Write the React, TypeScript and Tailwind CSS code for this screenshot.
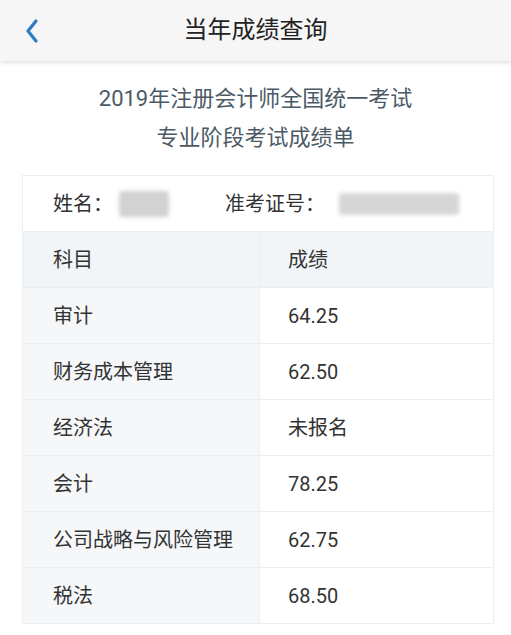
import type { FC } from "react";

const font = { fontFamily: 'Roboto, "Noto Sans CJK SC", "Noto Sans", sans-serif' };

const scores: { subject: string; score: string }[] = [
  { subject: "审计", score: "64.25" },
  { subject: "财务成本管理", score: "62.50" },
  { subject: "经济法", score: "未报名" },
  { subject: "会计", score: "78.25" },
  { subject: "公司战略与风险管理", score: "62.75" },
  { subject: "税法", score: "68.50" },
];

const Header: FC = () => (
  <header className="relative h-[61px] bg-[#f6f6f6] flex items-center justify-center shadow-[0_2px_4px_rgba(0,0,0,0.12)]">
    <button className="absolute left-[24px] top-[18px] text-[#2b7cc0]">
      <svg width="16" height="26" viewBox="0 0 16 26" fill="none">
        <path d="M12 3 L4 13 L12 23" stroke="currentColor" strokeWidth="3.2" strokeLinecap="round" strokeLinejoin="round" />
      </svg>
    </button>
    <h1 className="text-[24px] text-[#222] leading-none -mt-[1px]">当年成绩查询</h1>
  </header>
);

const Row: FC<{ left: string; right: string; head?: boolean }> = ({ left, right, head }) => (
  <div className="flex h-[56px] border-t border-[#eceff2] text-[20px] text-[#333]">
    <div className={`w-[237px] flex items-center pl-[30px] border-r border-[#eceff2] ${head ? "bg-[#f1f5f8]" : "bg-[#f5f7f9]"}`}>
      {left}
    </div>
    <div className={`flex-1 flex items-center pl-[28px] ${head ? "bg-[#f1f5f8]" : "bg-white"}`}>{right}</div>
  </div>
);

export default function App() {
  return (
    <div className="w-[511px] h-[635px] bg-white overflow-hidden" style={font}>
      <Header />
      <div className="flex flex-col items-center pt-[18px] text-[22px] text-[#4b5a66] leading-[39px]">
        <p>2019年注册会计师全国统一考试</p>
        <p>专业阶段考试成绩单</p>
      </div>
      <div className="ml-[22px] mt-[18px] w-[472px] border border-[#eceff2]">
        <div className="flex items-center h-[55px] text-[20px] text-[#333] bg-white">
          <span className="pl-[30px]">姓名：</span>
          <span className="ml-[6px] w-[50px] h-[26px] rounded bg-[#d2d2d2] blur-[2px]" />
          <span className="ml-[56px]">准考证号：</span>
          <span className="ml-[14px] w-[120px] h-[22px] rounded bg-[#d6d6d6] blur-[2px]" />
        </div>
        <Row left="科目" right="成绩" head />
        {scores.map((s) => (
          <Row key={s.subject} left={s.subject} right={s.score} />
        ))}
      </div>
    </div>
  );
}
